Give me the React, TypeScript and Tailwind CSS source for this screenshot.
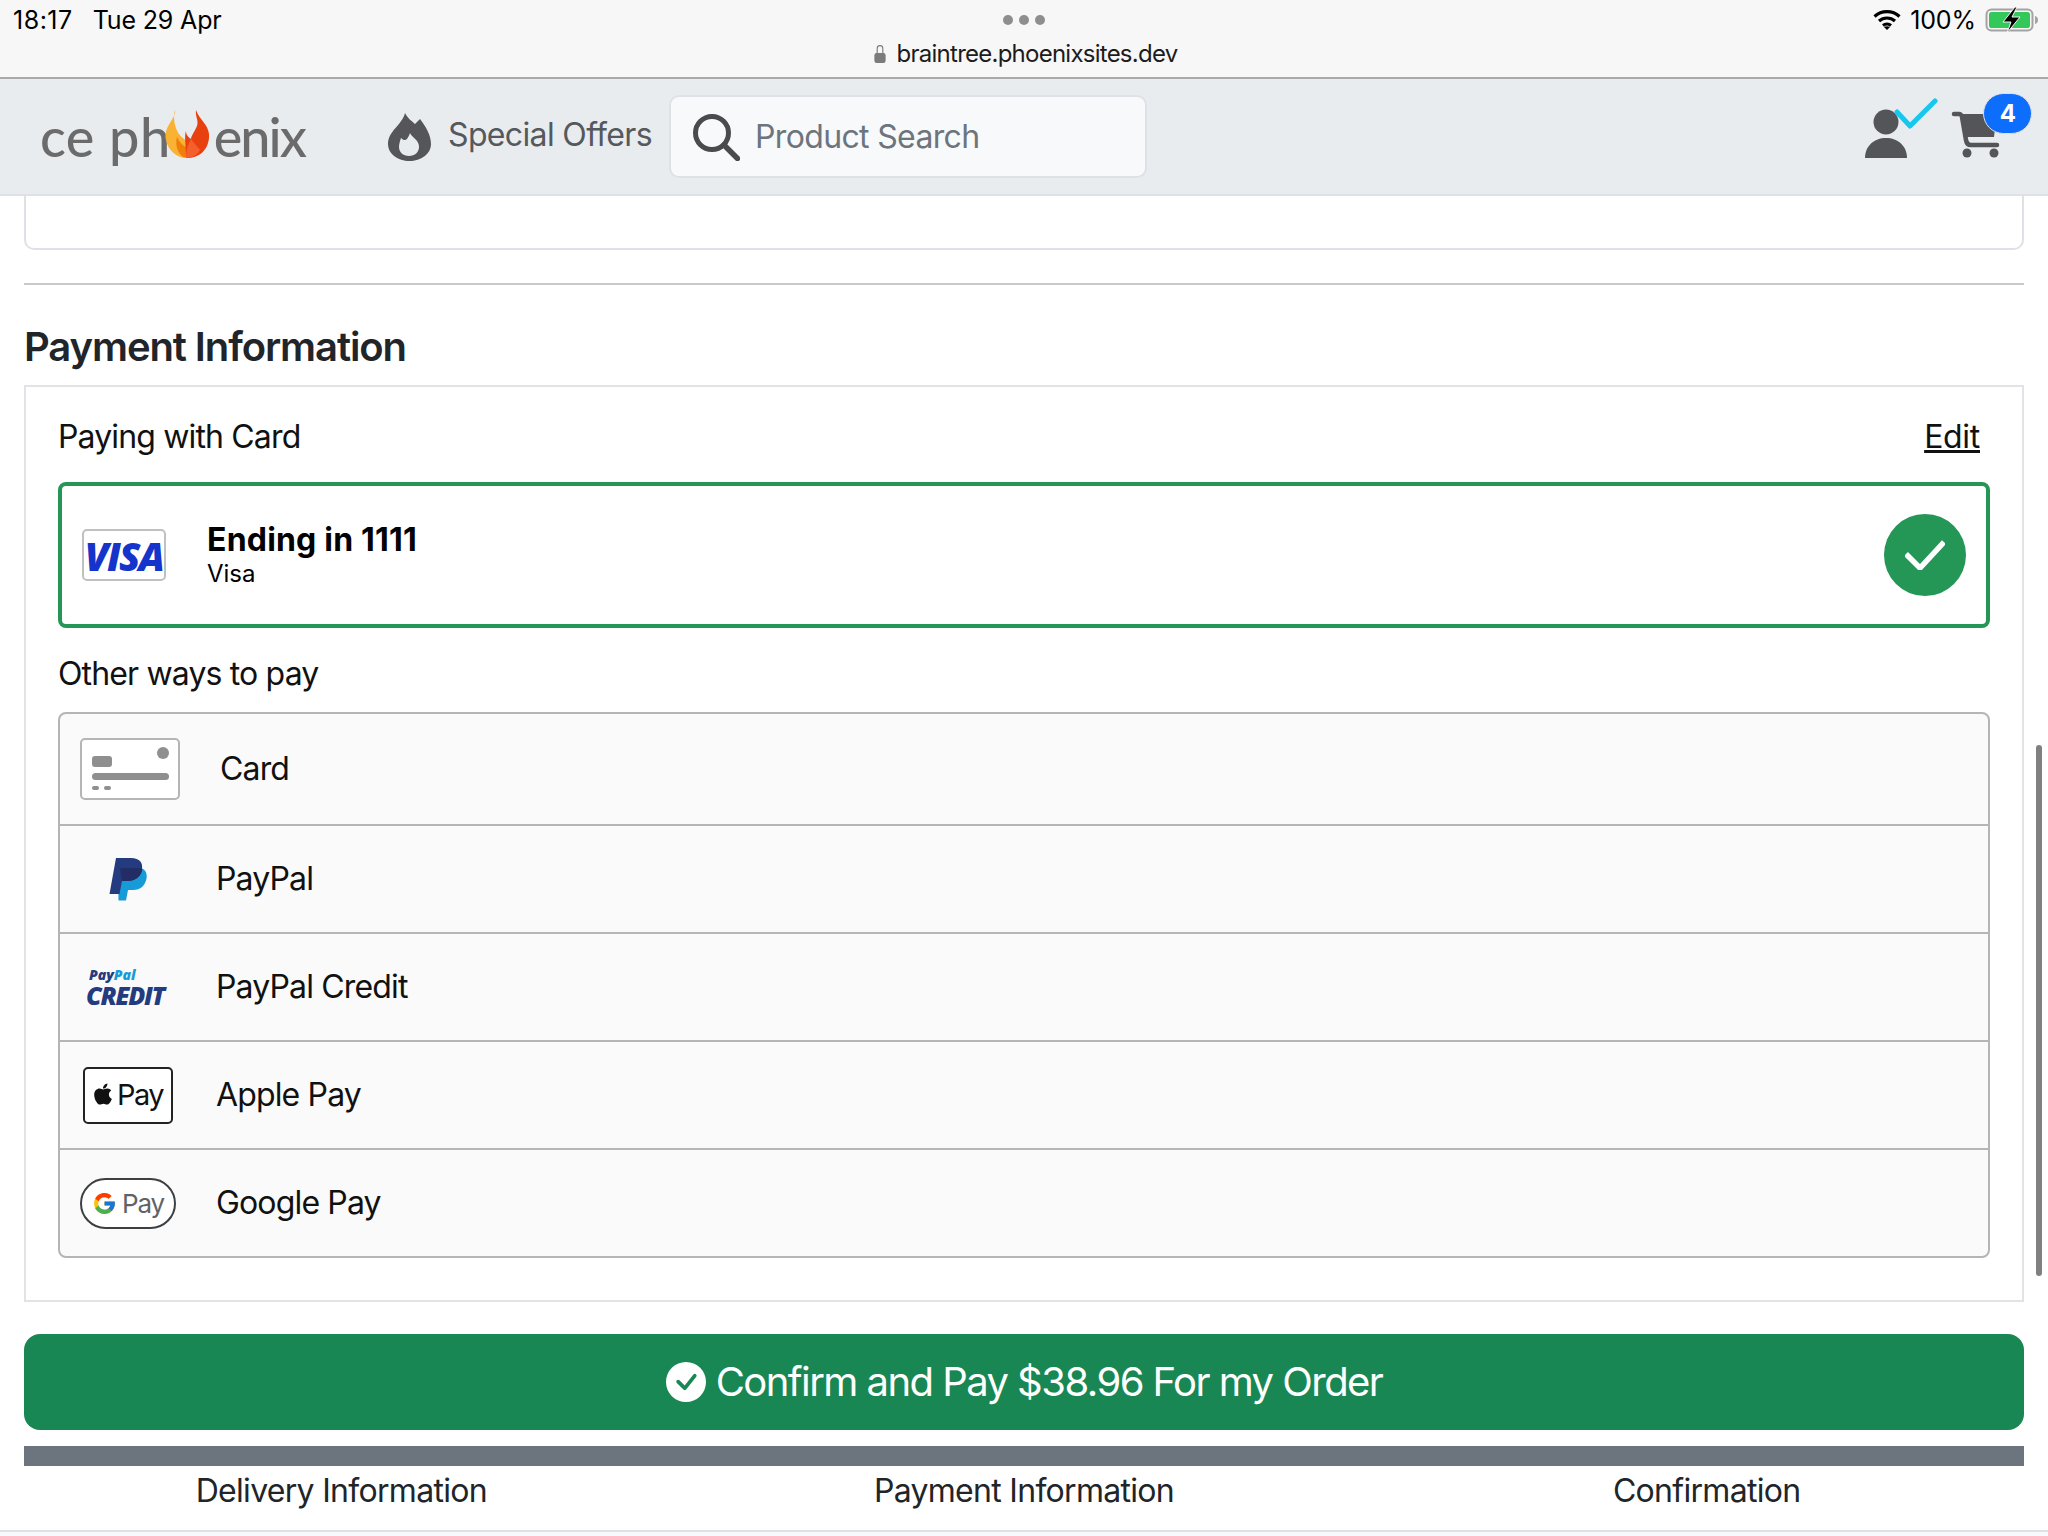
import { BsCheckCircleFill, BsLockFill } from "react-icons/bs";
import { FaApple } from "react-icons/fa";
import { FcGoogle } from "react-icons/fc";

const font = { fontFamily: "Inter, 'Noto Sans', sans-serif" };

function Battery() {
  return (
    <svg width="54" height="26" viewBox="0 0 54 26">
      <rect x="1.500" y="2.500" width="46" height="21" rx="5" fill="none" stroke="#a3a3a3" strokeWidth="2" />
      <rect x="4" y="5" width="41" height="16" rx="2.500" fill="#34c759" />
      <path d="M50 9c2 .5 3 2 3 4s-1 3.500-3 4z" fill="#a3a3a3" />
      <path d="M30 0 18 15h8l-4 11 13-16h-8l5-10z" fill="#000" stroke="#f7f7f7" strokeWidth="1" />
    </svg>
  );
}

function Wifi() {
  return (
    <svg width="28" height="22" viewBox="0 0 28 22" fill="none" stroke="#000" strokeWidth="3.200">
      <path d="M1.500 7.500c7-6.500 18-6.500 25 0" />
      <path d="M6 12c4.500-4 11.500-4 16 0" />
      <path d="M10 16.500c2.300-1.800 5.700-1.800 8 0" />
      <path d="m14 21-3-3c1.800-1 4.200-1 6 0z" fill="#000" stroke="none" />
    </svg>
  );
}

function Logo() {
  return (
    <div className="flex items-center w-[275px] text-[54px] leading-none text-[#6b6b6b] font-medium" style={{ fontFamily: "Lato, sans-serif" }}>
      <span className="tracking-[0.5px]">ce ph</span>
      <svg width="56" height="50" viewBox="0 0 48 50" className="shrink-0 ml-[-12px] mr-[-1px] mt-[-4px]">
        <path d="M12 0c2 8-12 16-9 30 2 11 12 18 20 18V30C14 26 9 12 12 0z" fill="#f9b233" />
        <path d="M20 47c-6-5-8-12-6-20 3 6 6 9 11 11l1 10z" fill="#f07f09" />
        <path d="M33 0c-1 7 3 10 1 16-2 5-6 10-6 13-3-2-5-4-5-8-2 6 0 12 0 27 13 1 24-9 23-24-1-10-10-15-13-24z" fill="#e8410f" />
        <path d="M23 48c0-8 2-14 5-19l9 11c-3 5-8 8-14 8z" fill="#f4602c" />
      </svg>
      <span className="tracking-[-2px]">enix</span>
    </div>
  );
}

function FlameIcon() {
  return (
    <svg width="43" height="48" viewBox="0 0 43 48" className="shrink-0">
      <path
        fillRule="evenodd"
        fill="#55565a"
        d="M17 0c3 6 7 8 10 11l5-5c6 8 11 16 11 25 0 10-10 17-21.500 17S0 41 0 31C0 18 14 12 17 0zM13 25c2 2 4 3 6 1 1-2 2-3 3-6 1 3 5 5 7 8 2 3 2 5 2 6 0 5-4 9-10 9s-10-4-10-9c0-3 1-6 2-9z"
      />
    </svg>
  );
}

function SearchIcon() {
  return (
    <svg width="48" height="48" viewBox="0 0 48 48" fill="none" stroke="#4a4b4e" className="shrink-0">
      <circle cx="20" cy="20" r="16.500" strokeWidth="5" />
      <path d="m32 32 13.500 13.500" strokeWidth="5.500" strokeLinecap="round" />
    </svg>
  );
}

function PersonCheck() {
  return (
    <svg width="73" height="60" viewBox="0 0 73 60">
      <circle cx="21" cy="24" r="12.500" fill="#545558" />
      <path d="M0 60c0-12 9-20 21-20s21 8 21 20z" fill="#545558" />
      <path d="m32 14 13 14L70 3" fill="none" stroke="#17c7ee" strokeWidth="5" strokeLinecap="round" strokeLinejoin="round" />
    </svg>
  );
}

function CartIcon() {
  return (
    <svg width="49" height="48" viewBox="0 0 49 48" fill="none">
      <path d="M9 4h37l-3 23H13z" fill="#545558" />
      <path d="M3 4h5c2 0 2.500 1 3 3l4 23c.5 3 2 5 5 5h26" stroke="#545558" strokeWidth="4.500" strokeLinecap="round" />
      <circle cx="16" cy="43" r="4.500" fill="#545558" />
      <circle cx="43" cy="43" r="4.500" fill="#545558" />
    </svg>
  );
}

function VisaIcon() {
  return (
    <div className="w-[84px] h-[52px] rounded-[5px] border-2 border-[#c0c0c0] flex items-center justify-center">
      <span className="text-[#1434cb] text-[39px] leading-none font-extrabold italic tracking-[-1.800px]" style={{ fontFamily: "'Open Sans', sans-serif" }}>
        VISA
      </span>
    </div>
  );
}

function CardIcon() {
  return (
    <div className="w-[100px] h-[62px] rounded-[5px] border-2 border-[#b5b5b5] bg-white relative">
      <span className="absolute left-[10px] top-[16px] w-[20px] h-[11px] rounded-[3px] bg-[#8f8f8f]" />
      <span className="absolute right-[9px] top-[7px] w-[12px] h-[12px] rounded-full bg-[#8f8f8f]" />
      <span className="absolute left-[10px] right-[9px] top-[33px] h-[7px] rounded-full bg-[#8f8f8f]" />
      <span className="absolute left-[10px] top-[46px] w-[7px] h-[4px] rounded-full bg-[#8f8f8f]" />
      <span className="absolute left-[22px] top-[46px] w-[7px] h-[4px] rounded-full bg-[#8f8f8f]" />
    </div>
  );
}

function PayPalIcon() {
  return (
    <svg width="38" height="44" viewBox="0 0 38 44">
      <path d="M9 10.500h19c8 0 10.500 5 9.500 11-1.300 7-6 11.500-13.500 11.500h-5l-2 10.500H9.500z" fill="#179bd7" />
      <path d="M7 1h15c9 0 12 5 11 11-1.200 8-7 12-14.500 12h-5.500l-2.500 13H.500z" fill="#253b80" />
      <path d="M11 11h17c3 0 5 .5 5.300 1.500C32 20 26 24 18.500 24H13z" fill="#222d65" />
    </svg>
  );
}

function CreditIcon() {
  return (
    <div className="w-[84px] flex flex-col italic font-extrabold tracking-normal" style={{ fontFamily: "'Open Sans', sans-serif" }}>
      <span className="text-[14px] leading-[16px] pl-[3px]">
        <span className="text-[#253b80]">Pay</span>
        <span className="text-[#179bd7]">Pal</span>
      </span>
      <span className="text-[25px] leading-[24px] tracking-[-1.300px] text-[#253b80]">CREDIT</span>
    </div>
  );
}

function ApplePayIcon() {
  return (
    <div className="w-[90px] h-[57px] rounded-[5px] border-2 border-[#222] bg-white flex items-center justify-center gap-[2px] text-[#111] text-[29px] tracking-[-1.500px] pr-[2px]">
      <FaApple size={24} className="mb-[3px]" />
      <span>Pay</span>
    </div>
  );
}

function GooglePayIcon() {
  return (
    <div className="w-[96px] h-[51px] rounded-full border-2 border-[#3c4043] bg-white flex items-center justify-center gap-[5px] text-[#5f6368] text-[26px] tracking-[-1.200px]">
      <FcGoogle size={25} />
      <span>Pay</span>
    </div>
  );
}

const methods = [
  { name: "PayPal", icon: <PayPalIcon /> },
  { name: "PayPal Credit", icon: <CreditIcon /> },
  { name: "Apple Pay", icon: <ApplePayIcon /> },
  { name: "Google Pay", icon: <GooglePayIcon /> },
];

export default function App() {
  return (
    <div className="relative w-[2048px] h-[1536px] overflow-hidden bg-white text-[#212529]" style={font}>
      {/* iOS status bar + url */}
      <div className="relative h-[79px] bg-[#f7f7f7] border-b-2 border-[#a9a9a9] text-black">
        <div className="flex items-start justify-between h-[40px] pl-[13px] pr-[9px] pt-[4px]">
          <div className="flex gap-[20px] text-[25px] leading-[32px] tracking-[-0.150px]">
            <span className="tracking-[0.500px]">18:17</span>
            <span>Tue 29 Apr</span>
          </div>
          <div className="flex items-center gap-[9px] text-[25px] leading-[32px] tracking-[-0.100px]">
            <Wifi />
            <span>100%</span>
            <Battery />
          </div>
        </div>
        <div className="absolute left-0 right-0 top-[15px] flex justify-center gap-[6px]">
          <span className="w-[10px] h-[10px] rounded-full bg-[#8e8e8e]" />
          <span className="w-[10px] h-[10px] rounded-full bg-[#8e8e8e]" />
          <span className="w-[10px] h-[10px] rounded-full bg-[#8e8e8e]" />
        </div>
        <div className="flex items-center justify-center gap-[8px] text-[24px] leading-[28px] tracking-[-0.750px] text-[#1c1c1c]">
          <BsLockFill size={18} className="text-[#7b7b7b]" />
          <span>braintree.phoenixsites.dev</span>
        </div>
      </div>

      {/* navbar */}
      <div className="relative h-[117px] bg-[#e9ecef] border-b-2 border-[#dee2e6] flex items-center pl-[40px] text-[32px] tracking-[-0.650px]">
        <Logo />
        <div className="ml-[73px]">
          <FlameIcon />
        </div>
        <span className="ml-[17px] w-[204px] whitespace-nowrap text-[#55595c] mb-[3px]">Special Offers</span>
        <div className="ml-[17px] w-[478px] h-[83px] rounded-[10px] border-2 border-[#dee2e6] bg-[#f8f9fa] flex items-center pl-[21px]">
          <SearchIcon />
          <span className="ml-[15px] text-[#6c757d] mt-[1px]">Product Search</span>
        </div>
        <div className="ml-auto mr-[48px] self-start mt-[19px] flex items-end gap-[13px]">
          <PersonCheck />
          <div className="relative h-[48px]">
            <CartIcon />
            <span className="absolute left-[32px] top-[-17px] w-[49px] h-[41px] rounded-full bg-[#0d6efd] border border-[#dee2e6] text-white text-[24px] font-bold flex items-center justify-center">
              4
            </span>
          </div>
        </div>
      </div>

      {/* content */}
      <div className="px-6">
        <div className="h-[54px] border-2 border-t-0 border-[#dee2e6] rounded-b-[10px]" />
        <div className="mt-[33px] border-t-2 border-[#c7c9cb]" />
        <h2 className="mt-[34px] text-[40px] leading-[56px] font-semibold tracking-[-1.100px]">Payment Information</h2>
        <div className="mt-[10px] h-[917px] border-2 border-[#e1e3e6] px-[32px] pt-[26px] text-[32px] tracking-[-0.850px]">
          <div className="flex justify-between items-center leading-[48px] text-[#111]">
            <span>Paying with Card</span>
            <span className="underline mr-[10px] tracking-[-0.300px]">Edit</span>
          </div>
          <div className="mt-[21px] h-[146px] rounded-[8px] border-4 border-[#249656] flex items-center pl-[20px] pr-[20px] tracking-normal">
            <VisaIcon />
            <div className="ml-[41px] mt-[2px] flex flex-col text-black">
              <span className="text-[32px] leading-[36px] font-bold tracking-[0.200px]">Ending in 1111</span>
              <span className="text-[24px] leading-[32px]">Visa</span>
            </div>
            <div className="ml-auto w-[82px] h-[82px] rounded-full bg-[#249656] flex items-center justify-center">
              <svg width="40" height="30" viewBox="0 0 40 30" fill="none" stroke="#fff" strokeWidth="5.500">
                <path d="m1 14 14 14L39 2" />
              </svg>
            </div>
          </div>
          <div className="mt-[22px] leading-[48px] text-[#111]">Other ways to pay</div>
          <div className="mt-[14px] rounded-[8px] border-2 border-[#b5b5b5] bg-[#fafafa] text-[#111]">
            <div className="h-[110px] flex items-center">
              <div className="w-[136px] ml-[2px] flex justify-center">
                <CardIcon />
              </div>
              <span className="ml-[22px]">Card</span>
            </div>
            {methods.map((m) => (
              <div key={m.name} className="h-[108px] flex items-center border-t-2 border-[#b5b5b5]">
                <div className="w-[136px] flex justify-center">{m.icon}</div>
                <span className="ml-[20px]">{m.name}</span>
              </div>
            ))}
          </div>
        </div>
        <button className="mt-[32px] w-full h-[96px] rounded-[16px] bg-[#198754] text-white text-[40px] tracking-[-1.550px] flex items-center justify-center gap-[10px]">
          <BsCheckCircleFill size={40} />
          <span>Confirm and Pay $38.96 For my Order</span>
        </button>
        <div className="mt-[16px] h-[20px] bg-[#6c757d]" />
      </div>
      <div className="grid grid-cols-3 text-center text-[32px] leading-[50px] tracking-[-0.700px]">
        <span>Delivery Information</span>
        <span>Payment Information</span>
        <span>Confirmation</span>
      </div>
      <div className="mt-[14px] h-[20px] bg-[#f8f9fa] border-t-2 border-[#dee2e6]" />

      {/* overlay scrollbar */}
      <div className="absolute left-[2036px] top-[745px] w-[6px] h-[531px] rounded-full bg-[#808080]" />
    </div>
  );
}
